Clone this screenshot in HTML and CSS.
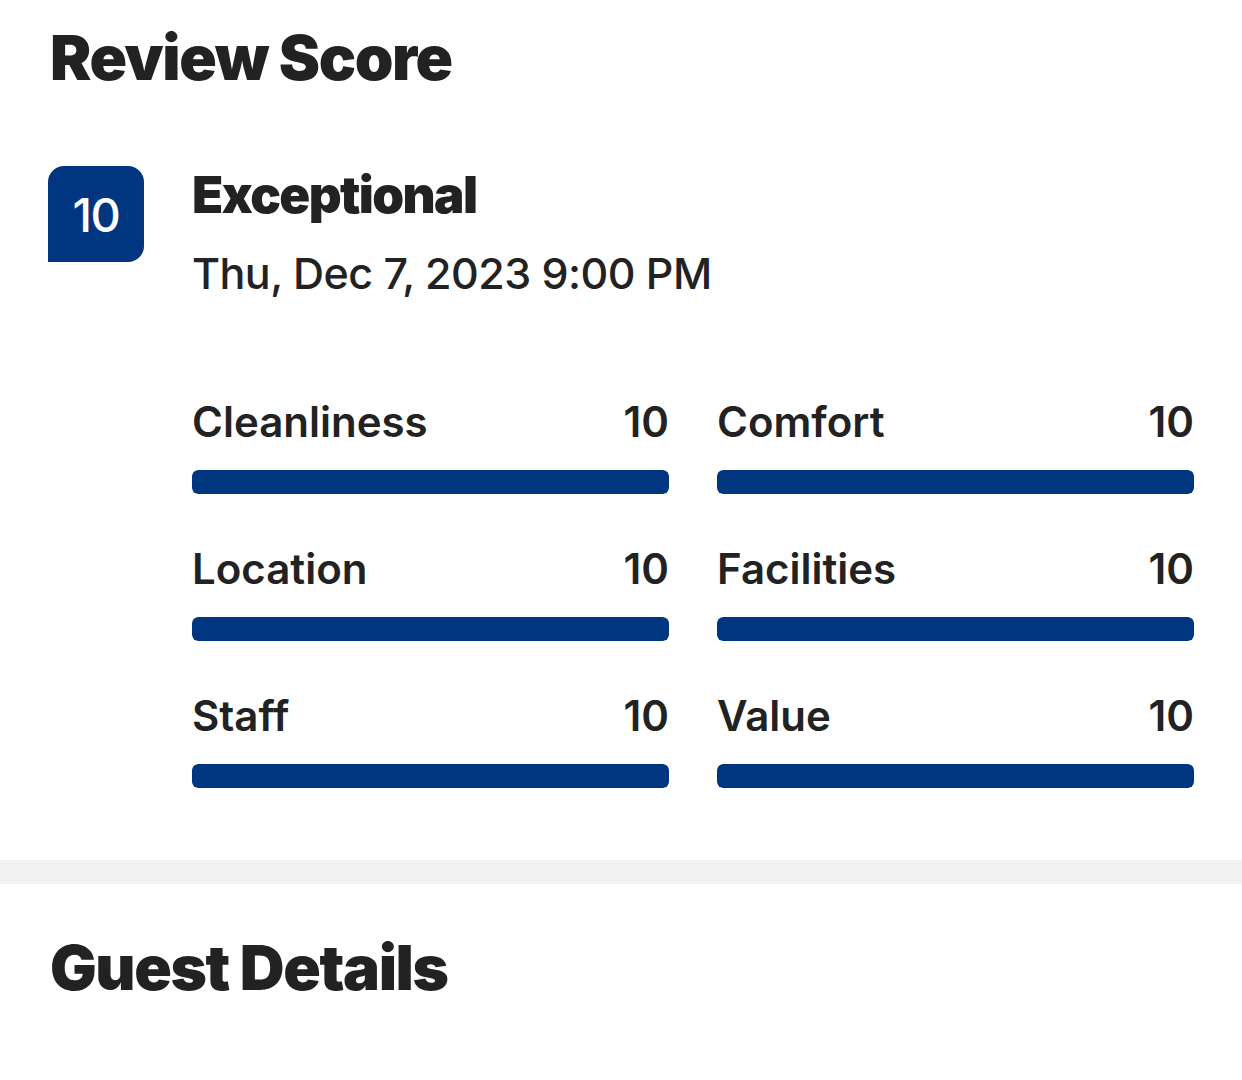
FILE: index.html
```html
<!DOCTYPE html>
<html lang="en">
  <head>
    <meta charset="UTF-8" />
    <meta name="viewport" content="width=device-width, initial-scale=1.0" />
    <title>Review Score</title>
    <link rel="stylesheet" href="styles.css">
  </head>
  <body>
    <section class="section review">
      <h1>Review Score</h1>

      <div class="score-row">
        <div class="badge">10</div>
        <div class="score-body">
          <div class="score-title">Exceptional</div>
          <div class="score-date">Thu, Dec 7, 2023 9:00 PM</div>

          <div class="sub-scores">
            <div class="sub">
              <div class="sub-head"><span>Cleanliness</span><span>10</span></div>
              <div class="bar"><div class="bar-fill" style="width: 100%"></div></div>
            </div>
            <div class="sub">
              <div class="sub-head"><span>Comfort</span><span>10</span></div>
              <div class="bar"><div class="bar-fill" style="width: 100%"></div></div>
            </div>
            <div class="sub">
              <div class="sub-head"><span>Location</span><span>10</span></div>
              <div class="bar"><div class="bar-fill" style="width: 100%"></div></div>
            </div>
            <div class="sub">
              <div class="sub-head"><span>Facilities</span><span>10</span></div>
              <div class="bar"><div class="bar-fill" style="width: 100%"></div></div>
            </div>
            <div class="sub">
              <div class="sub-head"><span>Staff</span><span>10</span></div>
              <div class="bar"><div class="bar-fill" style="width: 100%"></div></div>
            </div>
            <div class="sub">
              <div class="sub-head"><span>Value</span><span>10</span></div>
              <div class="bar"><div class="bar-fill" style="width: 100%"></div></div>
            </div>
          </div>
        </div>
      </div>
    </section>

    <div class="divider"></div>

    <section class="section guests">
      <h1>Guest Details</h1>
    </section>
  </body>
</html>
```

FILE: styles.css
```css
* {
  box-sizing: border-box;
  font-family: Inter, "Noto Sans", sans-serif;
}

html,
body {
  margin: 0;
  padding: 0;
  background: #fff;
  color: #222;
}

.section {
  padding: 20px 48px 0 50px;
}

.review {
  padding-bottom: 72px;
}

.guests {
  padding-top: 46px;
}

h1 {
  margin: 0;
  font-size: 62px;
  line-height: 76px;
  font-weight: 900;
  letter-spacing: -1.4px;
}

.score-row {
  display: flex;
  margin-top: 67px;
}

.badge {
  flex: none;
  width: 96px;
  height: 96px;
  margin: 3px 48px 0 -2px;
  background: #003580;
  color: #fff;
  border-radius: 16px 16px 16px 0;
  display: flex;
  align-items: center;
  justify-content: center;
  font-size: 47px;
  font-weight: 500;
  letter-spacing: -1.5px;
}

.score-body {
  flex: 1;
}

.score-title {
  font-size: 51px;
  line-height: 64px;
  font-weight: 900;
  letter-spacing: -1.6px;
}

.score-date {
  margin-top: 18px;
  font-size: 43px;
  line-height: 56px;
  font-weight: 500;
  letter-spacing: -0.55px;
}

.sub-scores {
  display: grid;
  grid-template-columns: 1fr 1fr;
  column-gap: 48px;
  row-gap: 49px;
  margin-top: 95px;
}

.sub-head {
  display: flex;
  justify-content: space-between;
  font-size: 42px;
  line-height: 52px;
  font-weight: 600;
}

.bar {
  margin-top: 22px;
  height: 24px;
  border-radius: 6px;
  background: #e6e6e6;
  overflow: hidden;
}

.bar-fill {
  height: 100%;
  background: #00357f;
  border-radius: 6px;
}

.divider {
  height: 24px;
  background: #f1f1f1;
}
```
